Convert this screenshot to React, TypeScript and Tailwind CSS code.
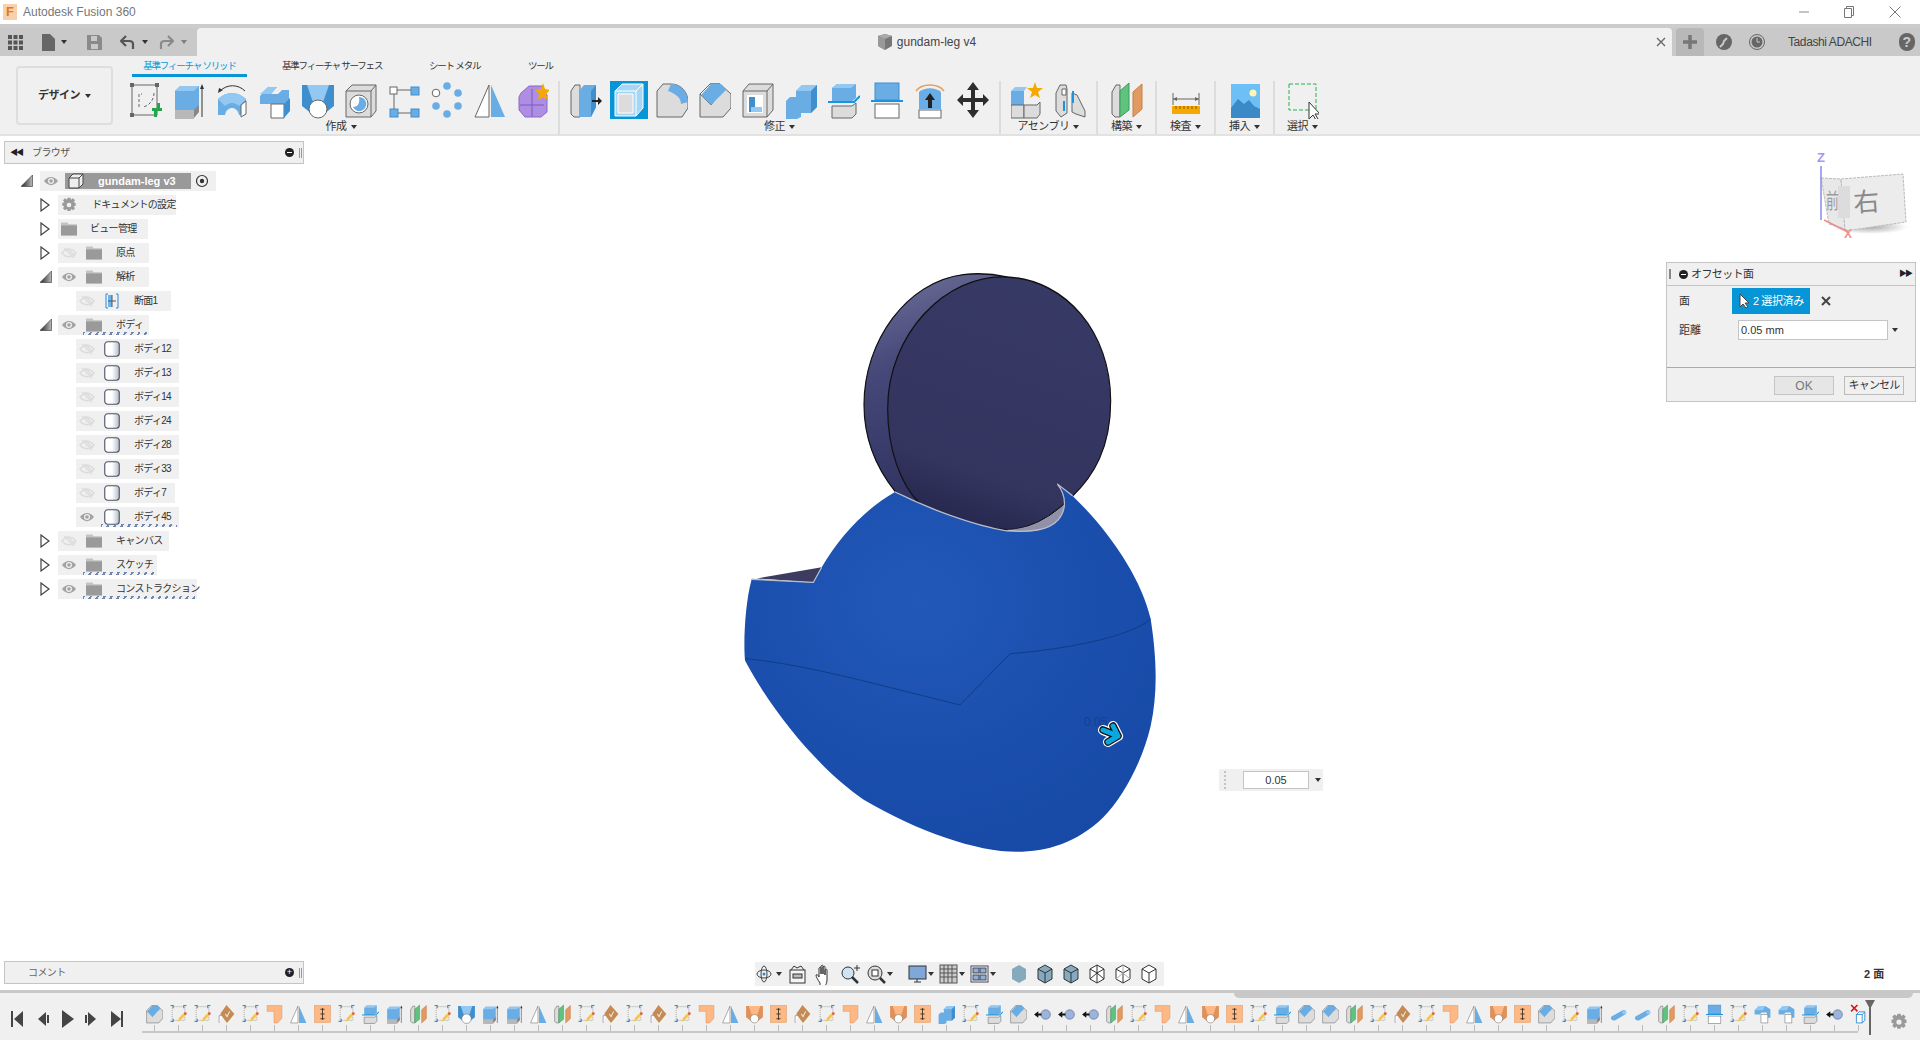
import React from 'react';

const B = '#69ade4';
const BD = '#3f8fcf';
const BL = '#93c8f2';
const G = '#dcdcdc';
const GD = '#b8b8b8';
const O = '#666666';
const OR = '#fdb883';
const ORD = '#e0915a';

const Ic = ({ w = 32, h = 38, children }: { w?: number; h?: number; children: React.ReactNode }) => (
    <svg width={w} height={h} viewBox="0 0 32 38" fill="none">{children}</svg>
);

const icons: Record<string, React.ReactNode> = {
    newSketch: (
        <>
            <rect x="2" y="4" width="25" height="30" stroke={O} strokeWidth="1" />
            <path d="M9 26V13h3M24 12c0 7-5 13-11 14" stroke={O} strokeDasharray="3 2" />
            <rect x="0" y="2" width="4" height="4" fill={O} /><rect x="25" y="2" width="4" height="4" fill={O} />
            <rect x="0" y="32" width="4" height="4" fill={O} />
            <path d="M22 27h5v-5h3v5h2v3h-5v6h-3v-6h-2z" fill="#22a54b" />
        </>
    ),
    extrude: (
        <>
            <path d="M2 10l5-5h19v24l-5 5H2z" fill={B} />
            <path d="M2 10l5-5h19l-5 5z" fill={BL} />
            <path d="M2 29h19v9H2z" fill={GD} />
            <path d="M21 29l5-5v7l-5 6z" fill="#888" />
            <path d="M29 36V5" stroke="#333" /><path d="M27 8l2-5 2 5z" fill="#333" />
        </>
    ),
    revolve: (
        <>
            <path d="M2 18c4-4 9-6 14-6s10 2 14 6v16l-7 0c-1-5-4-7-7-7s-6 2-7 7H2z" fill={B} />
            <path d="M2 18c4-4 9-6 14-6s10 2 14 6l-7 7c-1-1-4-3-7-3s-6 2-7 3z" fill={BL} />
            <path d="M25 24l5-4v13l-5 3z" fill="#fff" stroke={O} />
            <path d="M4 10c7-7 18-7 25 0" stroke="#333" /><path d="M2 12l1-5 4 2z" fill="#333" />
        </>
    ),
    sweep: (
        <>
            <path d="M1 15l8-9h9l-6 7h7l4-4h7v15l-8 8H12V23H1z" fill={B} />
            <path d="M9 6h9l-6 7H1z" fill={BL} />
            <path d="M12 23h13v14H12z" fill="#fff" stroke={O} />
            <path d="M25 23l6-6v13l-6 7z" fill={BD} />
        </>
    ),
    loft: (
        <>
            <path d="M0 4h32v21l-10 8H10L0 25z" fill={BD} />
            <path d="M5 4h22l-7 20h-8z" fill={BL} />
            <circle cx="16" cy="28" r="9" fill="#fff" stroke={O} />
        </>
    ),
    hole: (
        <>
            <path d="M1 10l6-6h24v26l-5 6H1z" fill={G} stroke={O} />
            <path d="M1 10h25v26M26 10l5-6" stroke={O} />
            <circle cx="14" cy="23" r="9" fill="#fff" stroke={O} />
            <path d="M14 16a7 7 0 1 1-6 10c5 0 7-4 6-10z" fill={B} />
        </>
    ),
    pattern: (
        <>
            <rect x="2" y="6" width="7" height="7" fill="#fff" stroke={O} />
            <rect x="23" y="6" width="8" height="8" fill={B} stroke={BD} />
            <rect x="2" y="28" width="8" height="8" fill={B} stroke={BD} />
            <rect x="23" y="28" width="8" height="8" fill={B} stroke={BD} />
            <path d="M9 9h14M6 13v15M10 32h13" stroke={O} />
        </>
    ),
    circular: (
        <>
            <circle cx="16" cy="5" r="3.8" fill={B} /><circle cx="27" cy="12" r="3.8" fill={B} />
            <circle cx="27" cy="25" r="3.8" fill={B} /><circle cx="16" cy="33" r="3.8" fill={B} />
            <circle cx="5" cy="25" r="3.8" fill={B} /><circle cx="5" cy="12" r="3.8" fill="#fff" stroke={O} />
        </>
    ),
    mirror: (
        <>
            <path d="M15 4v32H1z" fill="#fff" stroke={O} />
            <path d="M17 4l14 32H17z" fill={B} />
        </>
    ),
    form: (
        <>
            <path d="M4 12l8-7h14v4l4 5v17l-6 5H8l-6-7V16z" fill="#ae8ee4" stroke="#8a68c8" />
            <path d="M3 24h24M15 8v28" stroke="#7d5bb8" />
            <path d="M26 2l2 6 5 1-4 4 2 6-5-3-5 3 1-6-4-4 6-1z" fill="#f5a800" />
        </>
    ),
    press: (
        <>
            <path d="M1 10l4-6h5v32H4l-3-3z" fill={G} stroke={O} />
            <path d="M9 10l5-6h12v22l-5 10H9z" fill={B} />
            <path d="M21 10l5-6v22l-5 10z" fill={BD} />
            <path d="M22 20h8" stroke="#222" strokeWidth="2" /><path d="M28 16l4 4-4 4z" fill="#222" />
        </>
    ),
    offset: (
        <>
            <path d="M2 10l7-7h21v24l-7 8H2z" fill="#a6d6f5" stroke="#fff" />
            <path d="M2 10h21v25M23 10l7-7" stroke="#fff" />
            <path d="M5 13h15v19H5z" fill={G} stroke="#fff" />
        </>
    ),
    fillet: (
        <>
            <path d="M1 10l6-7h8c10 0 17 8 17 18v6l-6 9H1z" fill={G} stroke={O} />
            <path d="M15 3c10 0 17 8 17 18l-7 2c0-7-7-11-13-13z" fill={B} />
        </>
    ),
    chamfer: (
        <>
            <path d="M1 13l10-10h10l11 10v14l-8 9H1z" fill={G} stroke={O} />
            <path d="M1 13l10-10 10 0 4 4-13 17z" fill="#fff" stroke={O} />
            <path d="M12 3h10l5 6-15 15-10-10z" fill={B} />
        </>
    ),
    shell: (
        <>
            <path d="M1 10l6-7h24v26l-6 7H1z" fill={G} stroke={O} />
            <path d="M1 10h24v26M25 10l6-7" stroke={O} />
            <path d="M5 14h16v18H5z" fill="#fff" />
            <path d="M7 16h6v10h7v5H7z" fill={BD} /><path d="M13 16h7v10h-7z" fill="#fff" /><path d="M9 26h11v5H9z" fill={BL} />
        </>
    ),
    combine: (
        <>
            <path d="M11 10l6-6h15v22l-6 6H11z" fill={B} />
            <path d="M11 10l6-6h15l-6 6z" fill={BL} />
            <path d="M1 20l4-4h11v20l-4 2H1z" fill={B} />
            <path d="M26 10l6-6v22l-6 6z" fill={BD} />
        </>
    ),
    split: (
        <>
            <path d="M4 7l5-4h19v14l-5 4H4z" fill={B} />
            <path d="M4 7l5-4h19l-5 4z" fill={BL} />
            <path d="M0 21h26l6-6" stroke="#1a94e0" strokeWidth="2" />
            <path d="M4 25h20l4-3v11l-4 4H4z" fill={G} stroke={O} />
        </>
    ),
    faceSplit: (
        <>
            <rect x="4" y="2" width="24" height="17" fill={B} stroke={BD} />
            <path d="M0 20h32" stroke="#1a94e0" strokeWidth="2" />
            <rect x="4" y="23" width="24" height="14" fill="#fff" stroke={O} />
        </>
    ),
    replace: (
        <>
            <path d="M2 10C8 2 24 2 30 10" stroke="#ef9a55" strokeWidth="1.5" />
            <path d="M5 11c6-5 16-5 22 0v17H5z" fill={B} />
            <path d="M16 12l5 7h-3v8h-4v-8h-3z" fill="#222" />
            <rect x="5" y="29" width="22" height="8" fill="#fff" stroke={O} />
        </>
    ),
    move: (
        <path d="M16 1l6 8h-4v8h8v-4l6 6-6 6v-4h-8v8h4l-6 8-6-8h4v-8H6v4l-6-6 6-6v4h8V9h-4z" fill="#2d2d2d" />
    ),
    asmNew: (
        <>
            <path d="M0 10h13v14H0z" fill={B} /><path d="M0 10l4-4h12l-3 4z" fill={BL} />
            <path d="M0 24h13v13H0z" fill={G} stroke={O} />
            <path d="M13 24h13l3-3v12l-3 4H13z" fill={G} stroke={O} />
            <path d="M24 1l2 6 6 0-5 4 2 6-5-3-5 3 2-6-5-4 6 0z" fill="#f5a800" />
        </>
    ),
    asmJoint: (
        <>
            <path d="M2 12l4-8h6l1 4v24l-6 4-5-6z" fill={G} stroke={O} />
            <path d="M18 12l5 2 8 16v6l-9-3-4-2z" fill={G} stroke={O} />
            <path d="M8 8h4v6H8z" fill="#fff" stroke={O} />
            <path d="M10 20v10" stroke="#1a94e0" strokeWidth="2" />
            <path d="M19 10v12" stroke="#1a94e0" strokeWidth="2" />
        </>
    ),
    plane: (
        <>
            <path d="M1 11l4-7h4v32H4l-3-3z" fill={G} stroke={O} />
            <path d="M9 10l9-8v27l-9 7z" fill="#5fc37d" stroke="#3c9b59" />
            <path d="M22 11l9-8v25l-9 8z" fill="#e29a63" stroke="#c67e48" />
        </>
    ),
    measure: (
        <>
            <path d="M3 18h26" stroke={O} /><path d="M3 12v12M29 12v12" stroke={O} />
            <path d="M3 18l4-2v4zM29 18l-4-2v4z" fill={O} />
            <rect x="2" y="25" width="28" height="8" fill="#f5a800" />
            <path d="M6 25v3M10 25v3M14 25v3M18 25v3M22 25v3M26 25v3" stroke="#8a5c00" />
        </>
    ),
    picture: (
        <>
            <rect x="2" y="3" width="29" height="34" fill="#6cc0f5" />
            <path d="M2 27l7-9 6 5 5-4 5 6 6 3v9H2z" fill="#3a8ac8" />
            <circle cx="24" cy="12" r="3.5" fill="#fff7b0" />
        </>
    ),
    select: (
        <>
            <rect x="2" y="3" width="27" height="26" stroke="#22b24c" strokeDasharray="4 2" />
            <path d="M22 21v17l4-4 3 5 2-1-3-5h5z" fill="#fff" stroke="#333" />
        </>
    ),
    sk: (
        <>
            <rect x="4" y="5" width="24" height="26" stroke={O} strokeDasharray="2 2" />
            <path d="M1 3h5v5M31 3h-5v5M1 33h5v-5" stroke="#1a94e0" strokeWidth="2" />
            <path d="M14 34l3-8 10-10 4 4-10 10z" fill="#f5c84a" />
            <circle cx="29" cy="18" r="2.5" fill="#ee4444" />
        </>
    ),
    der: (
        <>
            <path d="M2 36V22h8" stroke={O} fill="#fff" />
            <path d="M16 2l15 17-14 17L4 19z" fill="#c58a55" />
            <path d="M14 19l3 5 5-10" stroke="#d8f5d8" strokeWidth="2" />
        </>
    ),
    lshape: <path d="M2 3h28v24l-8 9h-7V14H2z" fill={OR} stroke={ORD} />,
    osp: (
        <>
            <rect x="1" y="3" width="30" height="32" fill={OR} stroke={ORD} />
            <path d="M12 10h8M12 19h8M12 28h8M16 8v22" stroke="#222" strokeWidth="1.5" />
        </>
    ),
    lo: (
        <>
            <path d="M0 4h32v21l-10 8H10L0 25z" fill={ORD} />
            <path d="M5 4h22l-7 20h-8z" fill={OR} />
            <circle cx="16" cy="28" r="8" fill="#fff" stroke={O} />
        </>
    ),
    ball: (
        <>
            <circle cx="22" cy="20" r="9" fill="#9bb4dc" stroke="#4a5a80" />
            <path d="M0 20l8-6v4h6v4H8v4z" fill="#111" />
        </>
    ),
    cyl: (
        <>
            <path d="M2 24L24 12c4-2 8 2 6 7L10 31c-6 2-10-3-8-7z" fill={B} />
            <ellipse cx="27" cy="16" rx="4" ry="4" fill={BL} />
        </>
    ),
    blend: (
        <>
            <path d="M1 12l8-8h12l10 6v16H26l-2-10H14l-3 4H1z" fill={B} />
            <path d="M1 12l8-8h12l-4 8z" fill={BL} />
            <path d="M13 20h13v16H13z" fill="#fff" stroke={O} />
        </>
    ),
    del: (
        <>
            <path d="M2 2l12 12M14 2L2 14" stroke="#d01818" strokeWidth="3" />
            <path d="M12 20l5-5h11v16l-5 5H12z" fill="#fff" stroke="#1a7ac8" strokeWidth="1.5" />
            <path d="M12 20h11v16M23 20l5-5" stroke="#1a7ac8" strokeWidth="1.5" />
        </>
    ),
};

const createIcons = ['newSketch', 'extrude', 'revolve', 'sweep', 'loft', 'hole', 'pattern', 'circular', 'mirror', 'form'];
const modifyIcons = ['press', 'offset', 'fillet', 'chamfer', 'shell', 'combine', 'split', 'faceSplit', 'replace', 'move'];

const timeline = [
    'chamfer', 'sk', 'sk', 'der', 'sk', 'lshape', 'mirror', 'osp', 'sk', 'split', 'extrude', 'plane', 'sk', 'loft', 'extrude', 'extrude', 'mirror', 'plane', 'sk', 'der', 'sk',
    'der', 'sk', 'lshape', 'mirror', 'lo', 'osp', 'der', 'sk', 'lshape', 'mirror', 'lo', 'osp', 'combine', 'sk', 'split', 'chamfer', 'ball', 'ball', 'ball', 'plane', 'sk', 'lshape', 'mirror', 'lo', 'osp', 'sk', 'split',
    'chamfer', 'chamfer', 'plane', 'sk', 'der', 'sk', 'lshape', 'mirror', 'lo', 'osp', 'chamfer', 'sk', 'extrude', 'cyl', 'cyl', 'plane', 'sk', 'faceSplit', 'sk', 'blend', 'blend', 'split', 'ball', 'del',
];

const Caret = ({ className = '' }: { className?: string }) => (
    <span className={`inline-block w-0 h-0 border-l-[3px] border-r-[3px] border-t-[4px] border-l-transparent border-r-transparent border-t-[#333] ${className}`} />
);

const Group = ({ width, label, start = false, line = true, children }: { width: string; label: string; start?: boolean; line?: boolean; children: React.ReactNode }) => (
    <div className={`${width} shrink-0 flex flex-col items-center ${line ? 'border-r-2 border-[#dcdcdc]' : ''}`}>
        <div className={`flex w-full h-[38px] ${start ? 'justify-start' : 'justify-center'}`}>{children}</div>
        <div className="flex items-center gap-1 text-[11px] leading-[15px] tracking-[-0.5px] text-[#333]">{label}<Caret /></div>
    </div>
);

const ToolIcon = ({ name, active = false }: { name: string; active?: boolean }) => (
    <div className="w-[43px] flex justify-center">
        <div className={`w-[38px] h-[38px] flex items-center justify-center ${active ? 'bg-[#0696d7]' : ''}`}>
            <Ic>{icons[name]}</Ic>
        </div>
    </div>
);

const Eye = ({ off = false }: { off?: boolean }) => (
    <svg width="16" height="12" viewBox="0 0 16 12" fill="none" className="shrink-0">
        {off ? (
            <g stroke="#dcdcdc" strokeWidth="1.5">
                <path d="M1 6c4-5 10-5 14 0-4 5-10 5-14 0z" />
                <path d="M3 1l10 10M6 1l8 8" />
            </g>
        ) : (
            <g>
                <path d="M1 6c4-5.5 10-5.5 14 0-4 5.5-10 5.5-14 0z" fill="#a3a3a3" />
                <circle cx="8" cy="6" r="3" fill="#f0f0f0" />
                <circle cx="8" cy="6" r="1.8" fill="#a3a3a3" />
            </g>
        )}
    </svg>
);

const Folder = () => (
    <svg width="16" height="14" viewBox="0 0 17 14" className="shrink-0">
        <path d="M0 0h7l1 2h9v1H0z" fill="#c4c4c4" /><rect y="3" width="17" height="11" fill="#9a9a9a" />
    </svg>
);

const BodyIcon = () => (
    <svg width="16" height="16" viewBox="0 0 16 16" className="shrink-0">
        <defs><linearGradient id="bodyGrad" x1="0" x2="1" y1="0" y2="0"><stop offset="0" stopColor="#ffffff" /><stop offset="0.5" stopColor="#ffffff" /><stop offset="1" stopColor="#b4bcc8" /></linearGradient></defs>
        <rect x="0.75" y="0.75" width="14.5" height="14.5" rx="3" fill="url(#bodyGrad)" stroke="#4a5262" strokeWidth="1.1" />
    </svg>
);

const Arrow = ({ open }: { open: boolean }) =>
    open ? (
        <svg width="12" height="12" viewBox="0 0 12 12" className="shrink-0">
            <defs><linearGradient id="wedge" x1="0" x2="1"><stop offset="0" stopColor="#222" /><stop offset="1" stopColor="#bbb" /></linearGradient></defs>
            <path d="M0 11.5L11.5 0v11.5z" fill="url(#wedge)" stroke="#333" strokeWidth="0.6" />
        </svg>
    ) : (
        <svg width="10" height="14" viewBox="0 0 10 14" fill="none" className="shrink-0">
            <path d="M1 1l8 6-8 6z" fill="#fff" stroke="#444" strokeWidth="1.2" />
        </svg>
    );

const Wavy = () => (
    <span className="absolute bottom-0 left-[25px] right-[2px] h-[3px] bg-[repeating-linear-gradient(120deg,#6e86b0_0_2px,transparent_2px_6px)]" />
);

const Row1 = ({ label, open, off, w, wavy }: { label: string; open: boolean; off: boolean; w: string; wavy?: boolean }) => (
    <div className="flex items-center h-[20px] ml-[40px]">
        <div className="w-[18px] flex items-center"><Arrow open={open} /></div>
        <div className={`${w} relative h-[20px] bg-[#f0f0f0] flex items-center pl-[3px]`}>
            <Eye off={off} />
            <span className="ml-[9px]"><Folder /></span>
            <span className="ml-[14px] whitespace-nowrap">{label}</span>
            {wavy && <Wavy />}
        </div>
    </div>
);

const bodies = [
    { label: 'ボディ12', w: 'w-[103px]' },
    { label: 'ボディ13', w: 'w-[103px]' },
    { label: 'ボディ14', w: 'w-[103px]' },
    { label: 'ボディ24', w: 'w-[103px]' },
    { label: 'ボディ28', w: 'w-[103px]' },
    { label: 'ボディ33', w: 'w-[103px]' },
    { label: 'ボディ7', w: 'w-[99px]' },
];

const BodyRow = ({ label, w, on = false }: { label: string; w: string; on?: boolean }) => (
    <div className={`${w} relative ml-[76px] h-[20px] bg-[#f0f0f0] flex items-center pl-[3px]`}>
        <Eye off={!on} />
        <span className="ml-[9px]"><BodyIcon /></span>
        <span className="ml-[14px] whitespace-nowrap">{label}</span>
        {on && <Wavy />}
    </div>
);

const Tree = () => (
    <div className="mt-[7px] flex flex-col gap-[4px] text-[10px] leading-[20px] text-[#333] tracking-[-0.7px]">
        <div className="flex items-center h-[20px] ml-[21px]">
            <div className="w-[19px]"><Arrow open /></div>
            <div className="w-[176px] h-[20px] bg-[#f0f0f0] flex items-center pl-[3px]">
                <Eye />
                <div className="ml-[6px] w-[126px] h-[16px] bg-[#999] flex items-center">
                    <svg width="16" height="16" viewBox="0 0 16 16" className="ml-[3px] shrink-0">
                        <path d="M1 5l4-4h10v10l-4 4H1z" fill="#eee" stroke="#444" /><path d="M1 5h10v10M11 5l4-4" stroke="#444" fill="none" />
                    </svg>
                    <span className="ml-[14px] text-white font-bold text-[11px] tracking-normal">gundam-leg v3</span>
                </div>
                <svg width="14" height="14" viewBox="0 0 14 14" fill="none" className="ml-[4px]">
                    <circle cx="7" cy="7" r="5.5" stroke="#333" strokeWidth="1.2" /><circle cx="7" cy="7" r="2.2" fill="#333" />
                </svg>
            </div>
        </div>
        <div className="flex items-center h-[20px] ml-[40px]">
            <div className="w-[18px]"><Arrow open={false} /></div>
            <div className="w-[118px] h-[20px] bg-[#f0f0f0] flex items-center pl-[3px]">
                <svg width="16" height="16" viewBox="0 0 24 24" fill="#9a9a9a" className="shrink-0">
                    <path d="M10 1h4l1 3 3-2 3 3-2 3 3 1v4l-3 1 2 3-3 3-3-2-1 3h-4l-1-3-3 2-3-3 2-3-3-1v-4l3-1-2-3 3-3 3 2z" /><circle cx="12" cy="12" r="3.5" fill="#f0f0f0" />
                </svg>
                <span className="ml-[15px] whitespace-nowrap">ドキュメントの設定</span>
            </div>
        </div>
        <div className="flex items-center h-[20px] ml-[40px]">
            <div className="w-[18px]"><Arrow open={false} /></div>
            <div className="w-[90px] h-[20px] bg-[#f0f0f0] flex items-center pl-[3px]">
                <Folder />
                <span className="ml-[13px] whitespace-nowrap">ビュー管理</span>
            </div>
        </div>
        <Row1 label="原点" open={false} off w="w-[91px]" />
        <Row1 label="解析" open off={false} w="w-[91px]" />
        <div className="w-[95px] ml-[76px] h-[20px] bg-[#f0f0f0] flex items-center pl-[3px]">
            <Eye off />
            <svg width="14" height="16" viewBox="0 0 14 16" fill="none" className="ml-[10px] shrink-0">
                <path d="M3 1H1v14h2M11 1h2v14h-2" stroke="#2a8ad8" />
                <rect x="3" y="2" width="4" height="12" fill="#6ab4ee" /><path d="M3 8h8M7 2v12" stroke="#555" />
            </svg>
            <span className="ml-[15px] whitespace-nowrap">断面1</span>
        </div>
        <Row1 label="ボディ" open off={false} w="w-[91px]" wavy />
        {bodies.map((b) => <BodyRow key={b.label} {...b} />)}
        <BodyRow label="ボディ45" w="w-[103px]" on />
        <Row1 label="キャンバス" open={false} off w="w-[111px]" />
        <Row1 label="スケッチ" open={false} off={false} w="w-[99px]" wavy />
        <Row1 label="コンストラクション" open={false} off={false} w="w-[139px]" wavy />
    </div>
);

const Model = () => (
    <svg width="460" height="620" viewBox="0 0 1380 1563" preserveAspectRatio="none" fill="none" className="absolute left-[720px] top-[114px]">
        <defs>
            <linearGradient id="rim" x1="0.2" y1="0" x2="0.4" y2="1">
                <stop offset="0" stopColor="#6c6f98" /><stop offset="0.35" stopColor="#454878" /><stop offset="1" stopColor="#2c2e5c" />
            </linearGradient>
            <linearGradient id="disc" x1="0.7" y1="0" x2="0.4" y2="1">
                <stop offset="0" stopColor="#383a66" /><stop offset="0.8" stopColor="#33355f" /><stop offset="1" stopColor="#26274e" />
            </linearGradient>
            <radialGradient id="skin" cx="0.42" cy="0.32" r="0.75">
                <stop offset="0" stopColor="#2259b9" /><stop offset="0.55" stopColor="#1b4fae" /><stop offset="1" stopColor="#174aa6" />
            </radialGradient>
        </defs>
        <path d="M860 68C820 60 770 58 730 62 560 80 432 230 432 390c0 90 38 160 93 218l95 50 240 47z" fill="url(#rim)" stroke="#111" strokeWidth="3.5" />
        <path d="M860 68c180 7 312 142 312 312 0 120-52 190-114 240-58 50-128 85-198 85-100-5-220-35-260-65-60-50-97-140-97-240C503 210 680 60 860 68z" fill="url(#disc)" stroke="#111" strokeWidth="3.5" />
        <path d="M860 705c70 0 130-30 175-65l-5 40-40 25-60 8z" fill="#8f91a8" />
        <path d="M110 828l195-28-25 38z" fill="#3b3c60" />
        <path d="M95 830L280 838 305 800C360 720 440 650 525 610 620 650 760 695 860 708 930 712 985 708 1015 680 1040 655 1040 620 1012 590L1058 620C1170 710 1265 830 1292 930 1312 1040 1312 1120 1292 1200 1270 1280 1215 1375 1150 1430 1070 1495 980 1517 890 1517 770 1517 590 1465 430 1385 300 1310 160 1170 75 1035 70 990 75 890 95 830z" fill="url(#skin)" />
        <path d="M95 830L280 838 305 800M525 610C620 650 760 695 860 708 930 712 985 708 1015 680 1040 655 1040 620 1012 590L1058 620" stroke="#b9bdc9" strokeWidth="3.5" />
        <path d="M75 1030C250 1045 400 1080 720 1147L870 1018C1050 1005 1230 975 1292 930" stroke="#0e3a80" strokeWidth="2.5" />
    </svg>
);

const viewTools: [number, React.ReactNode, boolean][] = [
    [33, <g stroke="#444" fill="none"><ellipse cx="9" cy="11" rx="7" ry="4" /><ellipse cx="9" cy="11" rx="3" ry="8" /><circle cx="9" cy="11" r="1.5" fill="#2a8ad8" stroke="none" /></g>, true],
    [26, <g stroke="#333" fill="none"><rect x="2" y="7" width="15" height="13" fill="#f5f5f5" /><rect x="5" y="11" width="9" height="4" fill="#bbb" /><path d="M3 7l3-4 3 2 4-2 3 4" /></g>, false],
    [26, <path d="M6 20c-2-3-4-6-4-8 1-1 2 0 3 2V5c1-1 2-1 2 0v6-8c1-1 2-1 2 0v8-7c1-1 2-1 2 0v8-5c1-1 2-1 2 0v10c0 3-1 4-2 6H6z" fill="#fff" stroke="#333" />, false],
    [26, <g stroke="#333" fill="none"><circle cx="8" cy="10" r="6" fill="#cfe3f2" /><path d="M12 14l6 6" strokeWidth="2.5" /><path d="M14 5h6M17 2v6" /></g>, false],
    [41, <g stroke="#333" fill="none"><circle cx="9" cy="10" r="7" fill="#ddd" /><rect x="6" y="7" width="6" height="6" fill="#fff" /><path d="M14 15l5 5" strokeWidth="2.5" /></g>, true],
    [31, <g stroke="#333"><rect x="2" y="3" width="17" height="13" fill="#7fa8d8" /><path d="M7 19h7M10 16v3" /></g>, true],
    [31, <g stroke="#555"><rect x="2" y="2" width="17" height="18" fill="#ccc" /><path d="M6 2v18M10 2v18M14 2v18M2 6h17M2 10h17M2 14h17" /></g>, true],
    [37, <g stroke="#445"><rect x="2" y="3" width="17" height="16" fill="#fff" /><rect x="4" y="5" width="6" height="5" fill="#8eb0d8" /><rect x="11" y="5" width="6" height="5" fill="#8eb0d8" /><rect x="4" y="12" width="6" height="5" fill="#8eb0d8" /><rect x="11" y="12" width="6" height="5" fill="#8eb0d8" /></g>, true],
];

const Cube = ({ kind }: { kind: number }) => {
    const solid = kind < 3;
    return (
        <svg width="16" height="20" viewBox="0 0 16 20" fill="none">
            <path d="M8 1l7 4v10l-7 4-7-4V5z" fill={solid ? '#85aabe' : '#fff'} stroke={kind === 0 ? 'none' : '#333'} />
            {kind > 0 && <path d="M1 5l7 4 7-4M8 9v10" stroke="#333" />}
            {kind === 3 && <path d="M8 1v8M1 15l7-6 7 6" stroke="#333" />}
            {kind === 4 && <path d="M8 1v8M1 15l7-6 7 6" stroke="#aaa" />}
        </svg>
    );
};

const ViewBar = () => (
    <div className="absolute left-[755px] bottom-[4px] w-[409px] h-[24px] bg-[#f0f0f0] flex items-center">
        {viewTools.map(([w, g, caret], i) => (
            <div key={i} className="shrink-0 flex items-center" style={{ width: w }}>
                <svg width="22" height="22" viewBox="0 0 22 22" className="shrink-0">{g}</svg>
                {caret && <Caret className="-ml-[1px]" />}
            </div>
        ))}
        <div className="flex">
            {[0, 1, 2, 3, 4, 5].map((k) => (
                <div key={k} className="w-[26px] flex justify-center"><Cube kind={k} /></div>
            ))}
        </div>
    </div>
);

const Dialog = () => (
    <div className="mt-[126px] mr-[4px] w-[250px] h-[140px] shrink-0 bg-[#f0f0f0] border border-[#c4c4c4] text-[11px] text-[#333] flex flex-col">
        <div className="h-[23px] border-b border-[#c4c4c4] flex items-center pl-[2px] pr-[4px]">
            <span className="w-[2px] h-[10px] border-l border-r border-[#888] mr-[8px]" />
            <span className="w-[9px] h-[9px] rounded-full bg-[#222] flex items-center justify-center mr-[3px]"><span className="w-[5px] h-[1px] bg-white" /></span>
            <span className="tracking-[-0.6px]">オフセット面</span>
            <span className="ml-auto text-[8px] tracking-[-2px] text-[#222]">▶▶</span>
        </div>
        <div className="flex items-center mt-[2px] h-[26px]">
            <span className="ml-[12px] w-[53px]">面</span>
            <div className="w-[78px] h-[26px] bg-[#0696d7] text-white flex items-center pl-[7px] gap-[3px]">
                <svg width="11" height="16" viewBox="0 0 11 16"><path d="M1 1v13l3-3 3 4 2-1-3-4h4z" fill="#fff" stroke="#444" /></svg>
                <span className="whitespace-nowrap tracking-[-0.4px]">2 選択済み</span>
            </div>
            <svg width="10" height="10" viewBox="0 0 10 10" className="ml-[11px]"><path d="M1 1l8 8M9 1l-8 8" stroke="#444" strokeWidth="2" /></svg>
        </div>
        <div className="flex items-center mt-[6px] h-[20px]">
            <span className="ml-[12px] w-[59px]">距離</span>
            <div className="w-[150px] h-[20px] bg-white border border-[#c4c4c4] flex items-center pl-[2px]">0.05 mm</div>
            <Caret className="ml-[4px]" />
        </div>
        <div className="mt-[27px] border-t border-[#aaa] flex-1 flex items-start justify-end pt-[8px] pr-[11px] gap-[10px]">
            <div className="w-[60px] h-[19px] bg-[#e6e6e6] border border-[#c4c4c4] text-[#777] text-[12px] flex items-center justify-center">OK</div>
            <div className="w-[60px] h-[19px] bg-[#f0f0f0] border border-[#bbb] flex items-center justify-center tracking-[-0.8px]">キャンセル</div>
        </div>
    </div>
);

const NavCube = () => (
    <svg width="100" height="100" viewBox="0 0 100 100" fill="none" className="absolute left-[1812px] top-[14px]">
        <defs><radialGradient id="shadow" cx="0.5" cy="0.5" r="0.5"><stop offset="0" stopColor="#aaa" /><stop offset="1" stopColor="#fff" /></radialGradient></defs>
        <ellipse cx="58" cy="77" rx="38" ry="7" fill="url(#shadow)" />
        <path d="M9 28l20 1 4 50-16-5z" fill="#e8e8e8" stroke="#bbb" strokeDasharray="3 1" />
        <path d="M29 29l62-5 3 48-61 9z" fill="#ececec" stroke="#bbb" strokeDasharray="3 1" />
        <path d="M9 16v54" stroke="#8888ee" strokeWidth="1.5" />
        <path d="M12 70l24 12" stroke="#f08a8a" strokeWidth="1.5" />
        <rect x="26" y="36" width="12" height="32" fill="#dcdcdc" />
        <text x="5" y="12" fontSize="13" fontWeight="700" fill="#9a9af5" fontFamily="Liberation Sans">Z</text>
        <text x="32" y="88" fontSize="12" fontWeight="700" fill="#f09090" fontFamily="Liberation Sans">X</text>
        <text transform="translate(14 58) scale(0.85 1.4)" fontSize="15" fill="#9a9a9a" fontFamily="Noto Sans CJK JP">前</text>
        <text transform="translate(42 62) rotate(-4)" fontSize="26" fill="#8a8a8a" fontFamily="Noto Sans CJK JP">右</text>
    </svg>
);

const Timeline = () => (
    <div className="relative h-[50px] border-t-[3px] border-[#c8c8c8] bg-[#f0f0f0]">
        <div className="absolute left-[1234px] right-[7px] top-0 h-[5px] rounded-b-md bg-[#c8c8c8]" />
        <div className="flex items-start h-full">
            <div className="w-[145px] pl-[10px] mt-[17px] shrink-0">
                <svg width="115" height="18" viewBox="0 0 115 18" fill="#444">
                    <rect x="1" y="1" width="2" height="16" /><path d="M13 1v16L4 9z" />
                    <path d="M36 2v14l-8-7z" /><rect x="37" y="5" width="2" height="8" />
                    <path d="M52 0l12 9-12 9z" />
                    <rect x="75" y="5" width="2" height="8" /><path d="M78 2l8 7-8 7z" />
                    <path d="M101 1l10 8-10 8z" /><rect x="111" y="1" width="2" height="16" />
                </svg>
            </div>
            <div className="flex flex-col mt-[11px]">
                <div className="flex -ml-[3px]">
                    {timeline.map((name, i) => (
                        <div key={i} className="w-[24px] flex justify-center shrink-0"><Ic w={17} h={20}>{icons[name]}</Ic></div>
                    ))}
                </div>
                <div className="flex h-[8px] -ml-[3px] mt-[1px] border-b-2 border-[#c8c8c8] w-[1716px]">
                    {timeline.map((_, i) => (
                        <div key={i} className="w-[24px] flex justify-center shrink-0"><span className="w-px h-[6px] bg-[#bdbdbd]" /></div>
                    ))}
                </div>
            </div>
        </div>
        <div className="absolute left-[1865px] top-[7px] w-0 h-0 border-l-[5px] border-r-[5px] border-t-[9px] border-l-transparent border-r-transparent border-t-[#666]" />
        <div className="absolute left-[1869px] top-[10px] w-[2px] h-[32px] bg-[#666]" />
        <svg width="18" height="18" viewBox="0 0 24 24" fill="#9a9a9a" className="absolute left-[1890px] top-[20px]">
            <path d="M10 1h4l1 3 3-2 3 3-2 3 3 1v4l-3 1 2 3-3 3-3-2-1 3h-4l-1-3-3 2-3-3 2-3-3-1v-4l3-1-2-3 3-3 3 2z" /><circle cx="12" cy="12" r="3.5" fill="#f0f0f0" />
        </svg>
    </div>
);

export default function App() {
    return (
        <div className="h-[1040px] w-[1920px] overflow-hidden flex flex-col bg-white font-['Liberation_Sans','Noto_Sans_CJK_JP',sans-serif] text-[#333]">
            {/* Title bar */}
            <div className="h-[24px] flex items-center pl-[3px] pr-[19px] shrink-0">
                <div className="w-[14px] h-[16px] bg-[#f8d0ab] text-[#e07b20] text-[13px] font-bold leading-[16px] text-center">F</div>
                <span className="ml-[6px] text-[12px] text-[#777]">Autodesk Fusion 360</span>
                <div className="ml-auto flex items-center gap-[35px]">
                    <svg width="10" height="10" viewBox="0 0 10 10"><path d="M0 5h10" stroke="#888" /></svg>
                    <svg width="10" height="12" viewBox="0 0 10 12" fill="none"><path d="M0.5 2.5h7v9h-7zM2.5 2.5v-2h7v9h-2" stroke="#777" /></svg>
                    <svg width="12" height="12" viewBox="0 0 12 12"><path d="M0.5 0.5l11 11M11.5 0.5l-11 11" stroke="#777" /></svg>
                </div>
            </div>
            <div className="h-[4px] bg-[#cccccc] shrink-0" />

            {/* Tab row */}
            <div className="h-[28px] flex bg-[#c9c9c9] shrink-0">
                <div className="w-[197px] flex items-center pl-[8px]">
                    <svg width="15" height="15" viewBox="0 0 15 15" fill="#555">
                        <rect width="4" height="4" /><rect x="5.5" width="4" height="4" /><rect x="11" width="4" height="4" />
                        <rect y="5.5" width="4" height="4" /><rect x="5.5" y="5.5" width="4" height="4" /><rect x="11" y="5.5" width="4" height="4" />
                        <rect y="11" width="4" height="4" /><rect x="5.5" y="11" width="4" height="4" /><rect x="11" y="11" width="4" height="4" />
                    </svg>
                    <svg width="13" height="17" viewBox="0 0 13 17" fill="#666" className="ml-[19px]"><path d="M0 0h8l5 5v12H0z" /></svg>
                    <Caret className="ml-[6px]" />
                    <svg width="15" height="15" viewBox="0 0 15 15" fill="#8a8a8a" className="ml-[20px]"><path d="M0 0h12l3 3v12H0z" /><rect x="4" y="1" width="6" height="5" fill="#c9c9c9" /><rect x="4" y="9" width="7" height="5" fill="#c9c9c9" /></svg>
                    <svg width="15" height="15" viewBox="0 0 15 15" fill="none" className="ml-[18px]"><path d="M13 14V9c0-2-2-3-4-3H2" stroke="#555" strokeWidth="2.2" /><path d="M6 1L1 6l5 5" stroke="#555" strokeWidth="2.2" /></svg>
                    <Caret className="ml-[7px]" />
                    <svg width="15" height="15" viewBox="0 0 15 15" fill="none" className="ml-[11px]"><path d="M2 14V9c0-2 2-3 4-3h7" stroke="#8a8a8a" strokeWidth="2.2" /><path d="M9 1l5 5-5 5" stroke="#8a8a8a" strokeWidth="2.2" /></svg>
                    <Caret className="ml-[7px] opacity-50" />
                </div>
                <div className="w-[1475px] bg-[#f0f0f0] rounded-t-[4px] relative flex items-center justify-center">
                    <div className="flex items-center gap-[4px] text-[12px] text-[#444] mr-[16px]">
                        <svg width="16" height="18" viewBox="0 0 16 18"><path d="M1 3l7-2 7 2v10l-7 4-7-4z" fill="#777" /><path d="M1 3l7 3 7-3-7-2z" fill="#aaa" /><path d="M8 6v11l-7-4V3z" fill="#999" /></svg>
                        gundam-leg v4
                    </div>
                    <svg width="10" height="10" viewBox="0 0 10 10" className="absolute right-[6px] top-[9px]"><path d="M1 1l8 8M9 1l-8 8" stroke="#666" strokeWidth="1.3" /></svg>
                </div>
                <div className="flex-1 flex items-center">
                    <div className="ml-[4px] w-[28px] h-[28px] bg-[#b8b8b8] rounded-t-[4px] flex items-center justify-center">
                        <svg width="14" height="14" viewBox="0 0 14 14"><path d="M7 0v14M0 7h14" stroke="#777" strokeWidth="3.5" /></svg>
                    </div>
                    <svg width="16" height="16" viewBox="0 0 16 16" className="ml-[12px]"><circle cx="8" cy="8" r="8" fill="#666" /><path d="M11 4l-3 3-1 3-3 3" stroke="#c9c9c9" strokeWidth="2" fill="none" /></svg>
                    <svg width="16" height="16" viewBox="0 0 16 16" fill="none" className="ml-[17px]"><circle cx="8" cy="8" r="7.5" stroke="#666" /><circle cx="8" cy="8" r="5.5" fill="#666" /><path d="M8 4v4h3" stroke="#c9c9c9" /></svg>
                    <span className="ml-[23px] text-[12px] tracking-[-0.4px] text-[#444]">Tadashi ADACHI</span>
                    <div className="ml-[27px] w-[16px] h-[18px] rounded-full bg-[#666] text-[#ccc] text-[14px] font-bold leading-[18px] text-center">?</div>
                </div>
            </div>

            {/* Toolbar */}
            <div className="h-[80px] flex bg-[#f0f0f0] border-b-2 border-[#e2e2e2] shrink-0">
                <div className="ml-[16px] mt-[10px] w-[97px] h-[59px] border-2 border-[#dedede] rounded-[4px] flex items-center justify-center gap-[5px] text-[11px] font-bold tracking-[-0.5px] shrink-0">デザイン<Caret /></div>
                <div className="ml-[11px] flex flex-col pt-[3px]">
                    <div className="flex h-[13px] text-[9.5px] leading-[13px] tracking-[-1.2px] whitespace-nowrap">
                        <div className="relative w-[115px] ml-[8px] text-center text-[#0696d7]">基準フィーチャ ソリッド
                            <span className="absolute left-0 right-0 top-[15px] h-[3px] bg-[#0696d7]" />
                        </div>
                        <div className="ml-[35px] w-[147px] text-[#333]">基準フィーチャ サーフェス</div>
                        <div className="w-[99px] text-[#333]">シート メタル</div>
                        <div className="text-[#333]">ツール</div>
                    </div>
                    <div className="flex mt-[9px]">
                        <Group width="w-[436px]" label="作成" start>{createIcons.map((n) => <ToolIcon key={n} name={n} />)}</Group>
                        <Group width="w-[441px]" label="修正">{modifyIcons.map((n) => <ToolIcon key={n} name={n} active={n === 'offset'} />)}</Group>
                        <Group width="w-[97px]" label="アセンブリ"><ToolIcon name="asmNew" /><ToolIcon name="asmJoint" /></Group>
                        <Group width="w-[59px]" label="構築"><ToolIcon name="plane" /></Group>
                        <Group width="w-[59px]" label="検査"><ToolIcon name="measure" /></Group>
                        <Group width="w-[59px]" label="挿入"><ToolIcon name="picture" /></Group>
                        <Group width="w-[55px]" label="選択" line={false}><ToolIcon name="select" /></Group>
                    </div>
                </div>
            </div>

            {/* Viewport */}
            <div className="relative flex-1 flex justify-between">
                <Model />
                <NavCube />
                <div className="relative w-[300px] ml-[4px] flex flex-col pt-[5px] pb-[6px] shrink-0">
                    <div className="h-[23px] bg-[#f0f0f0] border border-[#c4c4c4] flex items-center pl-[5px] pr-[1px] text-[10px] text-[#555]">
                        <span className="text-[8px] tracking-[-2px] text-[#222]">◀◀</span>
                        <span className="ml-[10px] tracking-[-0.6px]">ブラウザ</span>
                        <span className="ml-auto w-[9px] h-[9px] rounded-full bg-[#222] flex items-center justify-center"><span className="w-[5px] h-[1px] bg-white" /></span>
                        <span className="ml-[5px] w-[3px] h-[10px] border-l border-r border-[#999]" />
                    </div>
                    <div className="-ml-[4px]"><Tree /></div>
                    <div className="mt-auto h-[23px] bg-[#f0f0f0] border border-[#c4c4c4] flex items-center pl-[23px] pr-[1px] text-[10px] text-[#666]">
                        <span className="tracking-[-0.6px]">コメント</span>
                        <span className="ml-auto w-[9px] h-[9px] rounded-full bg-[#222] text-white text-[9px] leading-[9px] text-center">+</span>
                        <span className="ml-[5px] w-[3px] h-[10px] border-l border-r border-[#999]" />
                    </div>
                </div>

                <span className="absolute left-[1084px] top-[577px] text-[12px] text-[#164090]">0.05</span>
                <svg width="30" height="28" viewBox="0 0 30 28" fill="none" className="absolute left-[1098px] top-[585px]">
                    <g strokeLinejoin="round" strokeLinecap="round">
                        <path d="M5 9l15 6M15 5l5 10-10 6" stroke="#fff" strokeWidth="10" />
                        <path d="M5 9l15 6M15 5l5 10-10 6" stroke="#111" strokeWidth="7.5" />
                        <path d="M5 9l15 6M15 5l5 10-10 6" stroke="#0aa8e2" strokeWidth="5" />
                    </g>
                </svg>

                <div className="absolute left-[1219px] top-[633px] w-[104px] h-[22px] bg-[#f0f0f0] flex items-center">
                    <span className="ml-[5px] w-[3px] h-[18px] border-l-2 border-dotted border-[#c4c4c4]" />
                    <div className="ml-[16px] w-[66px] h-[18px] bg-white border border-[#c4c4c4] text-[11px] leading-[16px] text-center">0.05</div>
                    <Caret className="ml-[6px]" />
                </div>

                <ViewBar />
                <span className="absolute left-[1864px] top-[830px] text-[11px] font-bold text-[#333]">2 面</span>

                <Dialog />
            </div>

            <Timeline />
        </div>
    );
}
